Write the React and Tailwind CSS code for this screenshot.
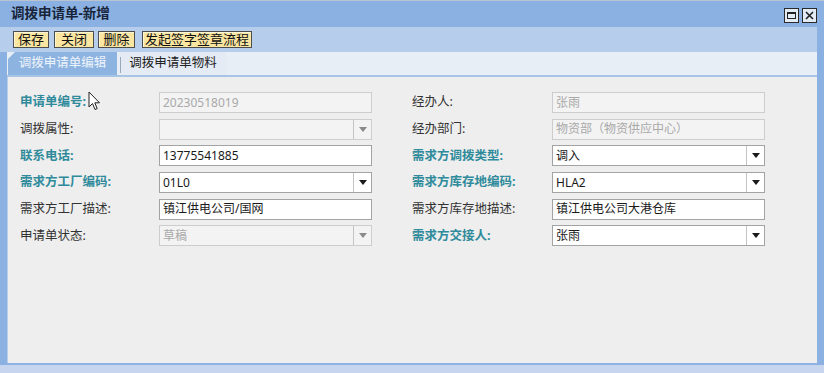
import React from "react";

const Arrow = ({ disabled }) => (
  <div className="w-[18px] h-full border-l border-[#c4c4c4] flex items-center justify-center">
    <svg width="8" height="5" viewBox="0 0 8 5">
      <polygon points="0,0 8,0 4,5" fill={disabled ? "#8a8a8a" : "#1a1a1a"} />
    </svg>
  </div>
);

const Field = ({ value, disabled, select }) => (
  <div
    className={
      "w-[213px] h-[21px] flex items-stretch border " +
      (disabled ? "bg-[#f3f3f3] border-[#cdcdcd] text-[#a9a9a9]" : "bg-white border-[#a3a3a3] text-[#1a1a1a]")
    }
  >
    <div className="flex-1 pl-[3px] flex items-center text-[12px] leading-none whitespace-nowrap">{value}</div>
    {select && <Arrow disabled={disabled} />}
  </div>
);

const Row = ({ label, req, value, disabled, select, labelW }) => (
  <div className="flex items-center h-[21px]">
    <div
      className={
        "text-[12.5px] leading-none whitespace-nowrap " +
        (req ? "font-bold text-[#2f8b9b]" : "text-[#333]") +
        " " +
        labelW
      }
    >
      {label}
    </div>
    <Field value={value} disabled={disabled} select={select} />
  </div>
);

export default function App() {
  const left = [
    { label: "申请单编号:", req: true, value: "20230518019", disabled: true },
    { label: "调拨属性:", value: "", disabled: true, select: true },
    { label: "联系电话:", req: true, value: "13775541885" },
    { label: "需求方工厂编码:", req: true, value: "01L0", select: true },
    { label: "需求方工厂描述:", value: "镇江供电公司/国网" },
    { label: "申请单状态:", value: "草稿", disabled: true, select: true },
  ];
  const right = [
    { label: "经办人:", value: "张雨", disabled: true },
    { label: "经办部门:", value: "物资部（物资供应中心）", disabled: true },
    { label: "需求方调拨类型:", req: true, value: "调入", select: true },
    { label: "需求方库存地编码:", req: true, value: "HLA2", select: true },
    { label: "需求方库存地描述:", value: "镇江供电公司大港仓库" },
    { label: "需求方交接人:", req: true, value: "张雨", select: true },
  ];
  const btn =
    "h-[17px] border border-[#4d4d4d] bg-[#fae5a1] text-[13px] leading-none text-[#111] flex items-center justify-center shadow-[inset_1px_1px_0_#fff6d6]";

  return (
    <div className="relative w-[824px] h-[373px] overflow-hidden bg-[#8ab1e1] flex flex-col font-['Noto_Sans','Noto_Sans_CJK_SC',sans-serif]">
      <div className="h-px bg-[#b9c4d0]" />
      {/* title bar */}
      <div className="h-[26px] flex items-center justify-between pl-[11px] pr-[7px]">
        <div className="text-[13.5px] font-bold text-[#17243a] leading-none">调拨申请单-新增</div>
        <div className="flex items-center gap-[3px] mt-[2px]">
          <div className="w-[15px] h-[15px] border border-[#2a2a2a] bg-[#e3ebf5] flex items-center justify-center">
            <div className="w-[9px] h-[7px] border border-[#222] border-t-[2px]" />
          </div>
          <div className="w-[15px] h-[15px] border border-[#2a2a2a] bg-[#e3ebf5] flex items-center justify-center">
            <svg width="9" height="9" viewBox="0 0 9 9">
              <path d="M1 1L8 8M8 1L1 8" stroke="#222" strokeWidth="1.6" />
            </svg>
          </div>
        </div>
      </div>
      {/* toolbar */}
      <div className="h-[25px] mr-[7px] bg-[#b6ceeb] flex items-center pl-[13px]">
        <div className={btn + " w-[36px]"}>保存</div>
        <div className={btn + " w-[40px] ml-[5px]"}>关闭</div>
        <div className={btn + " w-[37px] ml-[4px]"}>删除</div>
        <div className={btn + " w-[110px] ml-[7px]"}>发起签字签章流程</div>
      </div>
      {/* body */}
      <div className="flex-1 flex flex-col pl-[7px] pr-[7px]">
        <div className="h-[23px] bg-[#e8eef6] flex items-end pl-px">
          <div className="h-[23px] w-[109px] bg-[#8db3e0] text-[#eef4fb] text-[12.5px] leading-none flex items-center justify-center [clip-path:polygon(7px_0,100%_0,100%_100%,0_100%,0_7px)]">
            调拨申请单编辑
          </div>
          <div className="relative h-[23px] w-[106px] ml-[3px] bg-[#e4ebf4] text-[#222] text-[12.5px] leading-none flex items-center justify-center">
            <div className="absolute left-0 top-[5px] bottom-[2px] w-px bg-[#9aa8b8]" />
            调拨申请单物料
          </div>
        </div>
        <div className="h-[2px] bg-[#a7c3e6]" />
        <div className="h-[286px] bg-[#eeeeee] border-l border-[#b9cfe9] pt-[15px] pl-[12px] flex">
          <div className="flex flex-col gap-[5.7px]">
            {left.map((r, i) => (
              <Row key={i} {...r} labelW="w-[139px]" />
            ))}
          </div>
          <div className="flex flex-col gap-[5.7px] ml-[40px]">
            {right.map((r, i) => (
              <Row key={i} {...r} labelW="w-[140px]" />
            ))}
          </div>
        </div>
        <div className="h-[2px] bg-[#8db3e2]" />
      </div>
      <div className="h-[8px] bg-[#c7d6ee]" />
      {/* mouse cursor */}
      <svg className="absolute left-[88px] top-[91px]" width="13" height="20" viewBox="0 0 13 20">
        <path d="M1 1L1 16L4.5 12.5L7 18.5L9.2 17.6L6.8 11.8L11.5 11.8Z" fill="#fff" stroke="#222" strokeWidth="1" strokeLinejoin="round" />
      </svg>
    </div>
  );
}
